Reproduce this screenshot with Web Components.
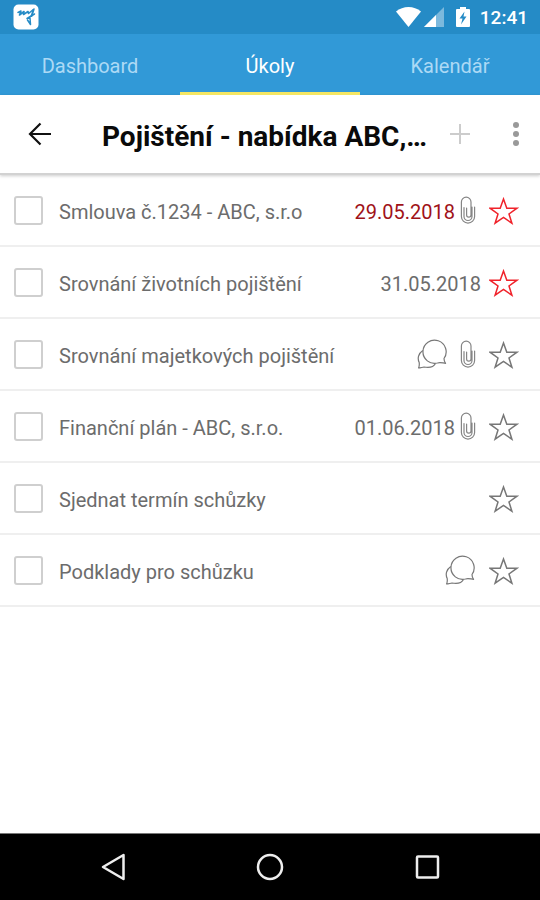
<!DOCTYPE html>
<html lang="cs">
<head>
<meta charset="utf-8">
<meta name="viewport" content="width=device-width, initial-scale=1">
<title>Úkoly</title>
<style>
  body {
    margin: 0;
    background: #fff;
    font-family: Roboto, "Noto Sans", sans-serif;
  }
</style>
</head>
<body>
<app-screen>
  <status-bar slot="top" time="12:41"></status-bar>
  <tab-bar slot="top">
    <tab-link href="#dashboard">Dashboard</tab-link>
    <tab-link href="#ukoly" active>Úkoly</tab-link>
    <tab-link href="#kalendar">Kalendář</tab-link>
  </tab-bar>
  <title-bar slot="top">Pojištění - nabídka ABC,…</title-bar>
  <task-item label="Smlouva č.1234 - ABC, s.r.o" date="29.05.2018" overdue attachment starred></task-item>
  <task-item label="Srovnání životních pojištění" date="31.05.2018" starred></task-item>
  <task-item label="Srovnání majetkových pojištění" comments attachment></task-item>
  <task-item label="Finanční plán - ABC, s.r.o." date="01.06.2018" attachment></task-item>
  <task-item label="Sjednat termín schůzky"></task-item>
  <task-item label="Podklady pro schůzku" comments></task-item>
  <nav-bar slot="bottom"></nav-bar>
</app-screen>

<script>
class AppScreen extends HTMLElement {
  constructor() {
    super();
    this.attachShadow({ mode: "open" });
    this.shadowRoot.innerHTML = `
      <style>
        :host {
          display: flex;
          flex-direction: column;
          min-height: 100vh;
        }
        main { flex: 1; }
      </style>
      <header><slot name="top"></slot></header>
      <main><slot></slot></main>
      <slot name="bottom"></slot>
    `;
  }
}

class StatusBar extends HTMLElement {
  constructor() {
    super();
    this.attachShadow({ mode: "open" });
  }

  connectedCallback() {
    this.shadowRoot.innerHTML = `
      <style>
        :host {
          display: flex;
          align-items: center;
          height: 34px;
          padding: 0 12px 0 13px;
          background: #258bc6;
          color: #fff;
        }
        svg { display: block; }
        .signal { margin-left: 3px; }
        .battery { margin: 0 10px 0 12px; }
        .wifi { margin-left: auto; }
        time {
          font-size: 19px;
          line-height: 34px;
          font-weight: 500;
          padding-top: 2px;
        }
      </style>
      <svg width="26" height="26" viewBox="0 0 26 26">
        <rect x="0.500" y="0.500" width="25" height="25" rx="5" fill="#fff"/>
        <g fill="none" stroke="#258bc6" stroke-linecap="round" stroke-linejoin="round">
          <path stroke-width="1.600" d="M5 8.500 8 7 6.500 11 11 7.500 10.500 10.500 15 7.500 15.500 9.500 21 5"/>
          <path stroke-width="2" d="M20.500 6 18.500 12"/>
          <path stroke-width="1.500" d="M21.500 10 14 14.500 17 14 17.500 20.500 14.500 16"/>
        </g>
      </svg>
      <svg class="wifi" width="25" height="20" viewBox="0 0 25 20">
        <path fill="#fff" d="M0 4.500C7-1.500 18-1.500 25 4.500L12.500 20Z"/>
      </svg>
      <svg class="signal" width="20" height="20" viewBox="0 0 20 20">
        <path fill="#fff" opacity=".4" d="M20 0V20H0Z"/>
        <path fill="#fff" d="M12 8V20H0Z"/>
      </svg>
      <svg class="battery" width="14" height="20" viewBox="0 0 14 20">
        <path fill="#fff" fill-rule="evenodd" d="M4 0h6v2h3a1 1 0 0 1 1 1v16a1 1 0 0 1-1 1H1a1 1 0 0 1-1-1V3a1 1 0 0 1 1-1h3ZM8.500 4.500 3.500 11.500H6.500L5 17.500 10.500 9.500H7.500Z"/>
      </svg>
      <time>${this.getAttribute("time")}</time>
    `;
  }
}

class TabBar extends HTMLElement {
  constructor() {
    super();
    this.attachShadow({ mode: "open" });
    this.shadowRoot.innerHTML = `
      <style>
        :host { display: block; background: #3199d7; }
        nav { display: flex; }
        ::slotted(*) { flex: 1; }
      </style>
      <nav><slot></slot></nav>
    `;
  }
}

class TabLink extends HTMLElement {
  constructor() {
    super();
    this.attachShadow({ mode: "open" });
  }

  connectedCallback() {
    this.shadowRoot.innerHTML = `
      <style>
        :host { display: block; }
        a {
          display: block;
          height: 58px;
          border-bottom: 3px solid transparent;
          color: #acd9f5;
          font-size: 20px;
          line-height: 64px;
          text-align: center;
          text-decoration: none;
        }
        :host([active]) a {
          border-color: #f5e663;
          color: #fff;
        }
      </style>
      <a href="${this.getAttribute("href")}"><slot></slot></a>
    `;
  }
}

class TitleBar extends HTMLElement {
  constructor() {
    super();
    this.attachShadow({ mode: "open" });
    this.shadowRoot.innerHTML = `
      <style>
        :host {
          display: flex;
          align-items: center;
          height: 80px;
          background: #fff;
          border-bottom: 2px solid #d2d2d2;
          box-shadow: 0 1px 3px rgba(0, 0, 0, 0.2);
          box-sizing: border-box;
        }
        button {
          flex: none;
          width: 48px;
          height: 48px;
          padding: 0;
          border: 0;
          background: none;
          cursor: pointer;
        }
        svg { display: block; margin: 0 auto; }
        .back { margin: 0 38px 0 16px; }
        h1 {
          flex: 1;
          min-width: 0;
          margin: 0;
          padding-top: 6px;
          color: #0a0a0a;
          font-size: 28px;
          line-height: 36px;
          font-weight: 700;
          white-space: nowrap;
        }
        .more { margin-left: 8px; }
      </style>
      <button class="back" aria-label="Zpět">
        <svg width="24" height="24" viewBox="0 0 24 24" fill="none" stroke="#111" stroke-width="2.200">
          <path d="M23 12H2M12.500 1.500 2 12 12.500 22.500"/>
        </svg>
      </button>
      <h1><slot></slot></h1>
      <button aria-label="Přidat">
        <svg width="20" height="20" viewBox="0 0 20 20" stroke="#ccc" stroke-width="2">
          <path d="M10 0V20M0 10H20"/>
        </svg>
      </button>
      <button class="more" aria-label="Další možnosti">
        <svg width="8" height="26" viewBox="0 0 8 26" fill="#999">
          <circle cx="4" cy="4" r="3"/>
          <circle cx="4" cy="13" r="3"/>
          <circle cx="4" cy="22" r="3"/>
        </svg>
      </button>
    `;
  }
}

const COMMENTS_ICON = `
  <svg class="comments" width="32" height="30" viewBox="0 0 32 30" fill="none" stroke="#777" stroke-width="1.200" stroke-linejoin="round">
    <path d="M28 19.500A11.600 11.600 0 1 0 21.500 24C24 23 26.500 24 29.600 24.300 28.500 23 28 21.500 28 19.500Z"/>
    <path d="M6.800 11.500C2.300 14.500 1.200 19.500 3.200 23.500 3.500 26 3.200 27.500 2.600 29 4.500 28.900 6 28.300 8 28 12.500 28.800 17.500 28.300 19.500 24.500"/>
  </svg>`;

const CLIP_ICON = `
  <svg class="clip" width="16" height="28" viewBox="0 0 16 28" fill="none" stroke="#858585" stroke-width="1.200" stroke-linecap="round">
    <path d="M11 12V6A4.800 4.800 0 0 0 1.400 6V20.500A6.600 6.600 0 0 0 14.600 20.500V11M4 11.500V20.500A4 4 0 0 0 12 20.500V11M11 12V19A2.200 2.200 0 0 1 6.600 19V12"/>
  </svg>`;

const STAR_ICON = `
  <svg width="30" height="28" viewBox="0 0 30 28" fill="none" stroke="currentColor" stroke-width="1.500">
    <path d="M14.500 2 17.800 11.200H28L20 17 22.900 26.200 14.500 20.500 6.100 26.200 9 17 1 11.200H11.200Z"/>
  </svg>`;

class TaskItem extends HTMLElement {
  constructor() {
    super();
    this.attachShadow({ mode: "open" });
  }

  connectedCallback() {
    const date = this.getAttribute("date");

    this.shadowRoot.innerHTML = `
      <style>
        :host {
          display: flex;
          align-items: center;
          height: 72px;
          padding: 0 21px 0 14px;
          border-bottom: 2px solid #efefef;
          box-sizing: border-box;
          color: #6c6c6c;
          font-size: 20px;
          line-height: 28px;
        }
        input {
          appearance: none;
          flex: none;
          width: 29px;
          height: 29px;
          margin: 0 16px 0 0;
          border: 2px solid #cfcfcf;
          border-radius: 3px;
          background: #fff;
        }
        input:checked { background: #3199d7; }
        label {
          flex: 1;
          min-width: 0;
          padding-top: 4px;
          white-space: nowrap;
          overflow: hidden;
          text-overflow: ellipsis;
        }
        time { padding-top: 4px; }
        :host([overdue]) time { color: #a01218; }
        svg { display: block; }
        .clip { margin-left: 5px; }
        button {
          flex: none;
          margin-left: 13px;
          padding: 2px 0 0;
          border: 0;
          background: none;
          color: #777;
          cursor: pointer;
        }
        time + button { margin-left: 8px; }
        .comments + .clip { margin-left: 12px; }
        :host([starred]) button { color: #f0232b; }
      </style>
      <input type="checkbox" id="done">
      <label for="done">${this.getAttribute("label")}</label>
      ${this.hasAttribute("comments") ? COMMENTS_ICON : ""}
      ${date ? `<time>${date}</time>` : ""}
      ${this.hasAttribute("attachment") ? CLIP_ICON : ""}
      <button aria-label="Hvězdička" aria-pressed="${this.hasAttribute("starred")}">${STAR_ICON}</button>
    `;

    const star = this.shadowRoot.querySelector("button");
    star.addEventListener("click", () => {
      star.setAttribute("aria-pressed", this.toggleAttribute("starred"));
    });
  }
}

class NavBar extends HTMLElement {
  constructor() {
    super();
    this.attachShadow({ mode: "open" });
    this.shadowRoot.innerHTML = `
      <style>
        :host {
          display: flex;
          justify-content: center;
          gap: 110px;
          height: 67px;
          background: #000;
          border-top: 1px solid #777;
          box-sizing: border-box;
        }
        button {
          width: 48px;
          padding: 0;
          border: 0;
          background: none;
          cursor: pointer;
        }
        svg { display: block; margin: 0 auto; }
      </style>
      <button aria-label="Zpět">
        <svg width="28" height="28" viewBox="0 0 28 28" fill="none" stroke="#eee" stroke-width="2.500" stroke-linejoin="round">
          <path d="M25.500 2V26L5 14Z"/>
        </svg>
      </button>
      <button aria-label="Domů">
        <svg width="28" height="28" viewBox="0 0 28 28" fill="none" stroke="#eee" stroke-width="2.500">
          <circle cx="14" cy="14" r="12"/>
        </svg>
      </button>
      <button aria-label="Přehled">
        <svg width="28" height="28" viewBox="0 0 28 28" fill="none" stroke="#eee" stroke-width="2.500">
          <rect x="3" y="3.500" width="21" height="21" rx="1"/>
        </svg>
      </button>
    `;
  }
}

customElements.define("app-screen", AppScreen);
customElements.define("status-bar", StatusBar);
customElements.define("tab-bar", TabBar);
customElements.define("tab-link", TabLink);
customElements.define("title-bar", TitleBar);
customElements.define("task-item", TaskItem);
customElements.define("nav-bar", NavBar);
</script>
</body>
</html>
